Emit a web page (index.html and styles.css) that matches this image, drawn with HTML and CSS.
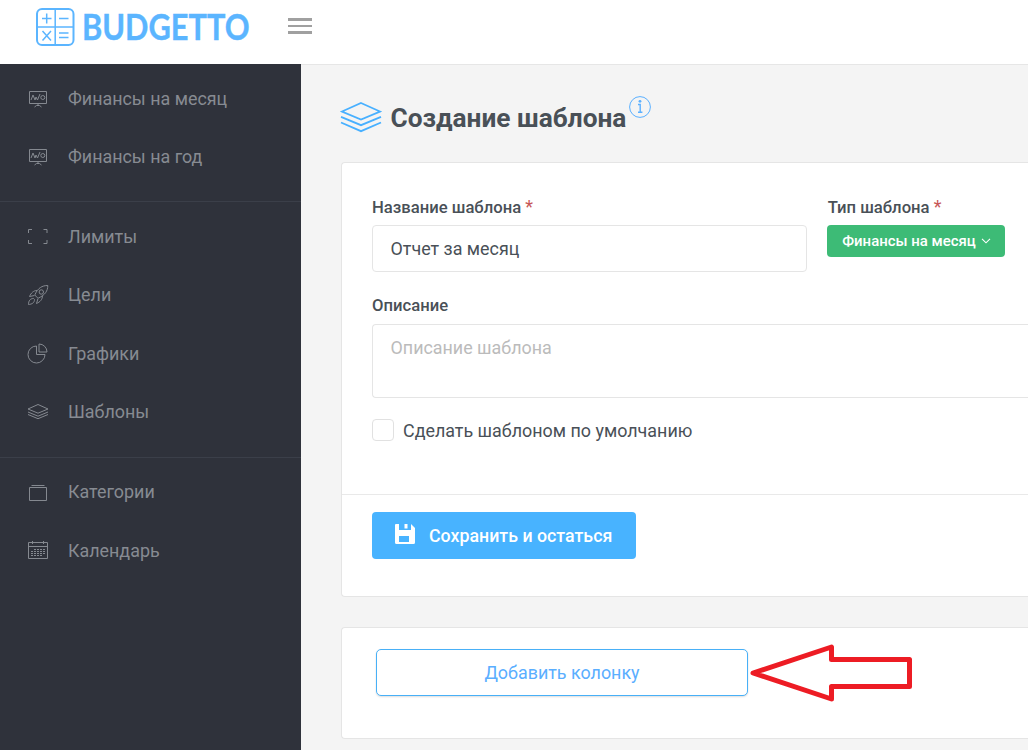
FILE: index.html
```html
<!DOCTYPE html>
<html lang="ru">
<head>
<meta charset="utf-8">
<title>Budgetto</title>
<link rel="stylesheet" href="styles.css">
</head>
<body>
<header class="header">
  <svg class="logo" width="216" height="40" viewBox="0 0 216 40">
    <g fill="none" stroke="#5bb5ff" stroke-width="2">
      <rect x="3" y="2" width="36.5" height="36" rx="5"/>
      <path stroke-width="1.5" d="M21.200 2v36M3 20h36.500"/>
      <path stroke-width="1.500" d="M8 11.500h9.500M12.700 6.500v10M25 11.500h9.500M8.500 24l8.500 9.500M17 24l-8.500 9.500M25 26h9.500M25 30.500h9.500"/>
    </g>
    <text class="logo-text" x="48" y="32.500" textLength="167.500" lengthAdjust="spacingAndGlyphs">BUDGETTO</text>
  </svg>
  <div class="burger"><i></i><i></i><i></i></div>
</header>
<div class="layout">
  <nav class="sidebar">
    <ul class="group">
      <li><svg viewBox="0 0 22 22"><path d="M2.500 3.500h17v12h-17zM11 15.500v2M7.500 19l2-1.500h3l2 1.500M4 12l2-5 2 5 1-3 1.500 3 2.500-6"/><circle cx="15.800" cy="9.500" r="2"/></svg>Финансы на месяц</li>
      <li><svg viewBox="0 0 22 22"><path d="M2.500 3.500h17v12h-17zM11 15.500v2M7.500 19l2-1.500h3l2 1.500M4 12l2-5 2 5 1-3 1.500 3 2.500-6"/><circle cx="15.800" cy="9.500" r="2"/></svg>Финансы на год</li>
    </ul>
    <ul class="group">
      <li><svg viewBox="0 0 22 22"><path d="M1.500 8V4.500h3.500M16.500 4.500h3.500V8M1.500 15v3.500h3.500M16.500 18.500h3.500V15"/></svg>Лимиты</li>
      <li><svg viewBox="0 0 22 22"><path d="M20.800 1.500C15 1.500 11 4 8 10.500c.5 1.700 2 3.200 3.500 3.500 6.500-3 9.300-7 9.300-12.500zM10 6.500C6.500 6.500 4 9 2.500 12.500L7.500 11.500M15.500 11.500C15.500 15.500 13 18 9.500 19.500l1.500-5M6.500 14.500C3 14.500 1.500 17 1.500 20.500c3.500-.2 6-1.800 6-5z"/><circle cx="14.300" cy="8" r="2.200"/></svg>Цели</li>
      <li><svg viewBox="0 0 22 22"><path d="M9.500 4a8.500 8.500 0 1 0 8.500 8.500H9.500zM12 2v8h8a8 8 0 0 0-8-8z"/></svg>Графики</li>
      <li><svg viewBox="0 0 22 22"><path d="M11 4.500L21 9l-10 4.200L1 9zM1 12l10 4.200L21 12M1 14.500l10 4.200 10-4.200"/></svg>Шаблоны</li>
    </ul>
    <ul class="group">
      <li><svg viewBox="0 0 22 22"><path d="M2.500 6.500h17v13h-17zM4.500 4.500h13"/></svg>Категории</li>
      <li><svg viewBox="0 0 22 22"><path d="M1.500 3.500h19v16h-19zM1.500 7.500h19M5.500 2v3M16.500 2v3"/><path stroke-dasharray="2 1" d="M7 10.500h11M4 12.500h14M4 14.500h14M4 16.500h11"/></svg>Календарь</li>
    </ul>
  </nav>
  <main class="main">
    <div class="title">
      <svg class="title-icon" width="42" height="32" viewBox="0 0 42 32"><path d="M21 2l19 8.500-19 8-19-8zM1 15.800l20 8.400 20-8.400M1 21.500l20 8.700 20-8.700"/></svg>
      <h1>Создание шаблона</h1>
      <svg class="info" width="22" height="22" viewBox="0 0 22 22"><circle cx="11" cy="11" r="10.400"/><path class="stem" d="M9 8.500h2.200v7.500M9 16.300h4.400"/><circle class="dot" cx="11" cy="5.300" r="1.400"/></svg>
    </div>
    <section class="card form-card">
      <div class="fields">
        <div class="name-field">
          <label>Название шаблона <span class="req">*</span></label>
          <div class="input">Отчет за месяц</div>
        </div>
        <div class="type-field">
          <label>Тип шаблона <span class="req">*</span></label>
          <button class="type-button">Финансы на месяц<svg width="10" height="8" viewBox="0 0 10 8"><path d="M1 1.800l4 4 4-4"/></svg></button>
        </div>
      </div>
      <div class="description">
        <label>Описание</label>
        <div class="input area">Описание шаблона</div>
      </div>
      <div class="check"><span class="box"></span>Сделать шаблоном по умолчанию</div>
      <div class="actions">
        <button class="save"><svg width="22" height="22" viewBox="0 0 22 22"><path fill-rule="evenodd" d="M2 1h3v6h12V1l4 4v14.500a1.500 1.500 0 0 1-1.500 1.500h-17A1.500 1.500 0 0 1 1 19.500V2a1 1 0 0 1 1-1zM10.500 1h3v4.500h-3zM5 13v6h10v-6z"/></svg>Сохранить и остаться</button>
      </div>
    </section>
    <section class="card column-card">
      <button class="add">Добавить колонку</button>
      <svg class="arrow" width="164" height="60" viewBox="0 0 164 60"><path d="M4 30L82.500 4V16.500H160.500V43.500H82.500V56z"/></svg>
    </section>
  </main>
</div>
</body>
</html>
```

FILE: styles.css
```css
* { box-sizing: border-box; }
body { margin: 0; width: 1028px; height: 750px; overflow: hidden; font-family: Roboto, "Liberation Sans", sans-serif; font-size: 17.900px; color: #495057; background: #f4f4f4; }
svg { display: block; flex: none; }
button { font-family: inherit; font-weight: 400; margin: 0; padding: 0; }
.header { height: 64px; background: #fff; display: flex; padding-left: 34px; }
.logo { margin-top: 7px; overflow: visible; }
.logo-text { font-family: Lato, sans-serif; font-weight: 700; font-size: 35.500px; fill: #5bb5ff; stroke: #5bb5ff; stroke-width: .4px; }
.burger { margin: 18px 0 0 38px; width: 24px; display: flex; flex-direction: column; gap: 4px; }
.burger i { height: 2.500px; background: #a0a0a0; }
.layout { display: flex; height: 686px; }
.sidebar { width: 301px; background: #2f323b; flex: none; padding-top: 5.500px; }
.group { list-style: none; margin: 0; padding: 0; }
.group + .group { margin-top: 15px; padding-top: 5.200px; border-top: 1px solid #3b3f49; }
.group:last-child { margin-top: 16.200px; padding-top: 5px; }
.group li { height: 58.300px; display: flex; align-items: center; padding-left: 27px; color: #878b92; }
.group svg { width: 22px; height: 22px; margin-right: 19px; fill: none; stroke: #858990; stroke-width: 1; }
.main { flex: 1; min-width: 0; padding-left: 40px; border-top: 1px solid #e6e6e6; }
.title { height: 97px; display: flex; align-items: flex-start; }
.title-icon { margin-top: 36px; margin-left: -1px; fill: none; stroke: #48b0ff; stroke-width: 1.800; }
h1 { margin: 38px 0 0 8.500px; font-size: 26.250px; line-height: 30px; font-weight: 700; white-space: nowrap; }
.info { margin: 31px 0 0 2.500px; fill: none; stroke: #5bb0ff; stroke-width: 1; }
.stem { stroke-width: 1.400; }
.dot { fill: #5bb0ff; stroke: none; }
.card { background: #fff; border: 1px solid #e5e5e5; border-right: 0; border-radius: 4px 0 0 4px; }
.form-card { height: 435px; padding: 34px 0 0 30px; }
.fields { display: flex; gap: 20px; height: 98px; }
.name-field { width: 435px; }
label { display: block; height: 28px; font-size: 16.650px; line-height: 21px; font-weight: 500; white-space: nowrap; }
.type-field label { padding-left: .700px; }
.req { color: #c75757; font-weight: 400; font-size: 18px; line-height: 1; }
.input { height: 47px; border: 1px solid #e5e5e5; border-radius: 4px; padding-left: 17.500px; line-height: 46px; }
.type-button { width: 178px; height: 32px; background: #3dbb76; border: 0; border-radius: 4px; color: #fff; font-size: 14.950px; font-weight: 500; display: flex; align-items: center; justify-content: center; gap: 5px; padding-left: 1px; white-space: nowrap; }
.type-button svg { fill: none; stroke: #fff; stroke-width: 1.100; }
.description { height: 124px; }
.description label { height: 29px; }
.area { height: 74px; color: #bbb; border-right: 0; border-radius: 4px 0 0 4px; }
.check { display: flex; align-items: center; height: 22px; }
.box { width: 22px; height: 22px; border: 1px solid #e1e1e1; border-radius: 4px; margin-right: 9px; }
.actions { margin: 53px 0 0 -30px; padding: 17px 0 0 30px; border-top: 1px solid #e9e9e9; }
.save { width: 264px; height: 47px; background: #48b3ff; border: 0; border-radius: 4px; color: #fff; font-size: 17.800px; font-weight: 500; display: flex; align-items: center; padding-left: 22px; white-space: nowrap; }
.save svg { fill: #fff; margin: -3px 13px 0 0; }
.column-card { margin-top: 30px; height: 112px; display: flex; padding: 21px 0 0 34px; }
.add { width: 372px; height: 47px; border: 1px solid #48b0f7; border-radius: 5px; background: #fff; color: #5aaeff; font-size: 17.900px; box-shadow: 0 1px 2px #ddd; }
.arrow { margin: -6px 0 0 1px; fill: none; stroke: #ed1c24; stroke-width: 5; stroke-linejoin: round; }
```
